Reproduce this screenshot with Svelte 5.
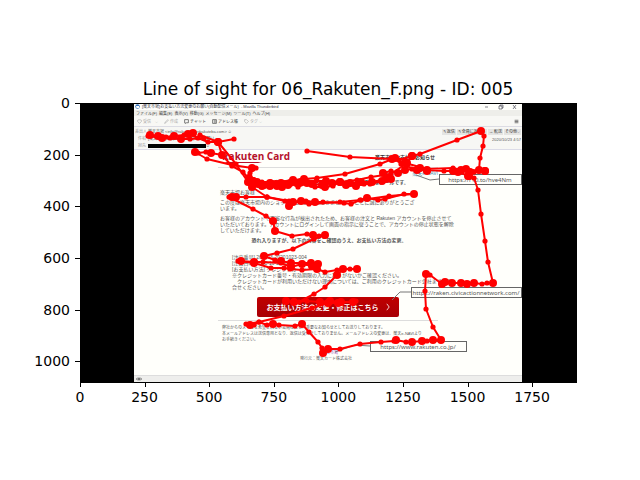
<script>
  const xTicks = [0, 250, 500, 750, 1000, 1250, 1500, 1750];
  const yTicks = [0, 200, 400, 600, 800, 1000];
  const scale = 496 / 1920;

  // Gaze traces: [x, y, large fixation?]
  const traces = [
    [[234, 139], [218, 142, 1], [208, 142], [198, 138], [188, 134, 1], [193, 133, 1], [184, 135], [174, 136, 1], [166, 137], [158, 136, 1], [150, 135, 1], [148, 136], [162, 138, 1], [170, 138], [181, 139, 1], [190, 139], [204, 138], [200, 135], [218, 142, 1], [236, 164], [248, 182, 1]],
    [[195, 152, 1], [198, 153], [206, 152], [211, 153, 1], [222, 155, 1]],
    [[195, 152], [207, 159], [232, 165], [252, 168, 1], [256, 168], [250, 173], [249, 178, 1], [253, 181, 1], [252, 187, 1], [267, 197]],
    [[218, 142], [222, 155], [232, 166], [243, 172], [253, 184, 1], [262, 182], [272, 184, 1], [281, 183, 1], [293, 180, 1], [304, 179, 1], [317, 178], [345, 174], [380, 164], [395, 158, 1], [405, 160]],
    [[253, 181, 1], [258, 184, 1], [264, 185, 1], [270, 186, 1], [276, 184, 1], [282, 187, 1], [290, 183, 1], [298, 187], [307, 183, 1], [315, 187], [325, 187, 1], [333, 186], [340, 182, 1], [346, 185, 1], [356, 186, 1], [364, 184], [370, 184], [382, 181, 1], [391, 179, 1], [388, 176], [383, 173, 1], [391, 171], [398, 173, 1], [405, 170, 1], [412, 169], [420, 168, 1], [427, 171, 1]],
    [[257, 182, 1], [271, 182], [285, 184, 1], [301, 182, 1], [316, 181], [326, 181, 1], [340, 182, 1], [357, 180], [371, 177], [391, 174], [407, 163, 1], [412, 156, 1]],
    [[249, 180, 1], [262, 186, 1], [270, 183, 1], [277, 186, 1], [288, 185, 1], [298, 183, 1], [312, 184, 1], [322, 185, 1], [332, 183, 1], [350, 183, 1], [361, 182, 1], [372, 182, 1], [386, 179, 1]],
    [[307, 151], [350, 157], [392, 159, 1], [399, 160], [412, 156, 1], [420, 154], [457, 140], [481, 131, 1], [484, 136], [483, 146], [480, 158], [479, 170, 1]],
    [[392, 159], [405, 163, 1], [427, 169], [453, 168], [461, 170, 1], [466, 169, 1], [479, 171], [485, 171, 1], [474, 172], [469, 176, 1], [458, 172, 1], [453, 171, 1], [444, 171], [427, 170, 1], [417, 170, 1], [401, 164], [395, 158]],
    [[485, 171, 1], [470, 172, 1], [468, 176, 1], [474, 178], [478, 190], [481, 214], [485, 241], [488, 262], [493, 283, 1], [487, 283], [482, 284], [474, 283, 1], [467, 284, 1], [461, 283, 1], [452, 283, 1], [445, 282, 1], [442, 284, 1], [430, 275], [426, 274, 1], [425, 291], [426, 309], [433, 327], [441, 340, 1], [433, 340, 1], [427, 341], [422, 341, 1], [412, 342, 1], [406, 342], [396, 340, 1], [394, 341], [381, 342], [360, 344], [340, 349], [328, 349, 1], [323, 353, 1], [322, 348], [318, 342], [309, 332], [302, 324, 1], [295, 326], [279, 325], [273, 324, 1], [267, 325], [259, 322], [254, 325], [250, 325, 1], [246, 324], [259, 322], [284, 316], [312, 308], [328, 303, 1], [338, 303, 1], [356, 301]],
    [[414, 194, 1], [404, 194], [385, 199], [378, 200], [367, 198, 1], [360, 200], [351, 204], [344, 203], [323, 202], [315, 202, 1], [306, 201], [301, 201, 1], [293, 202, 1], [289, 206, 1], [285, 201], [267, 197], [246, 197], [236, 197, 1], [232, 197, 1], [229, 197], [253, 209], [266, 216], [273, 221, 1], [275, 231, 1], [292, 236], [307, 234], [313, 235, 1], [319, 236], [325, 235, 1], [314, 239], [293, 249], [277, 253], [264, 256, 1], [275, 260], [281, 261, 1], [291, 263, 1], [303, 263], [311, 263, 1], [318, 264, 1], [312, 266, 1], [302, 264, 1], [291, 267, 1], [281, 263], [263, 262], [254, 262, 1], [241, 261, 1], [238, 261], [254, 263, 1], [271, 268], [284, 268], [290, 269], [302, 270], [317, 269, 1], [325, 272], [337, 270], [343, 269, 1], [350, 269], [357, 269, 1], [343, 269], [337, 275, 1], [325, 287], [314, 294], [299, 302], [286, 301, 1], [294, 302, 1], [307, 301], [320, 302, 1], [330, 301, 1], [341, 302, 1], [353, 302, 1]],
    [[414, 194], [389, 196], [361, 200], [340, 202], [309, 204], [289, 201], [267, 197]]
  ];

  const callouts = [
    { x: 439, y: 174, w: 82, text: 'https://r10.to/hve4Nm', lead: '416,175 430,180 439,179', size: 6 },
    { x: 411, y: 287, w: 110, text: 'https://raken.civicactionnetwork.com/', lead: '392,300 400,292 411,292', size: 6 },
    { x: 370, y: 341, w: 96, text: 'https://www.rakuten.co.jp/', lead: '335,352 355,345 370,346', size: 6 }
  ];
</script>

<svg class="figure" viewBox="0 0 640 480" role="img" aria-label="Line of sight plot">
  <text class="title" x="328" y="95">Line of sight for 06_Rakuten_F.png - ID: 005</text>
  <rect x="80" y="103" width="496" height="279" />

  <foreignObject x="134" y="103" width="388" height="279">
    <div class="mail">
      <header class="titlebar">
        <svg class="app" viewBox="0 0 10 10"><circle cx="5" cy="5" r="4.5" fill="#3474bc" /><path d="M2 4h6v4H3z" fill="#fff" /></svg>
        <span>[楽天市場]お支払い方法変更のお願い(自動配信メール)</span>
        <span class="name">- Mozilla Thunderbird</span>
        <svg class="window" viewBox="0 0 34 6" fill="none" stroke="#555" stroke-width=".6"><path d="M1 3h3M15 2h3v3h-3zM16 2V1h3v3h-1M29 1l3 4M32 1l-3 4" /></svg>
      </header>
      <nav>
        <span>ファイル(F)</span><span>編集(E)</span><span>表示(V)</span><span>移動(G)</span><span>メッセージ(M)</span><span>ツール(T)</span><span>ヘルプ(H)</span>
      </nav>
      <div class="tools">
        <button class="dim"><svg viewBox="0 0 8 8"><path d="M1 2c0-1 6-1 6 0v2L4 7 1 4z" /></svg>受信　⌵</button>
        <button class="dim"><svg viewBox="0 0 8 8"><path d="M1 7l1-2 4-4 1 1-4 4z" /></svg>作成</button>
        <button><svg viewBox="0 0 8 8"><path d="M1 1h6v5H4L2 7V6H1z" /></svg>チャット</button>
        <button><svg viewBox="0 0 8 8"><path d="M1 1h6v6H1zM3 5h3M3 3h3" /></svg>アドレス帳</button>
        <button class="dim"><svg viewBox="0 0 8 8"><path d="M1 1h3l3 3-3 3-3-3z" /></svg>タグ ⌵</button>
        <button class="menu" aria-label="メニュー"><svg viewBox="0 0 8 8"><path d="M1 2h6M1 4h6M1 6h6" /></svg></button>
      </div>
      <section class="head">
        <dl>
          <dt>差出人</dt><dd>楽天市場 &lt;info@rakuten.cardrakuteba.com&gt; ✩</dd>
          <dt>件名</dt><dd>[楽天市場]お支払い方法変更のお願い</dd>
          <dt>宛先</dt><dd><i class="redacted"></i>✩</dd>
        </dl>
        <div class="side">
          <div class="actions"><button>↰ 返信</button><button>↰ 全員に返信 ⌵</button><button>→ 転送</button><button>その他⌵</button></div>
          <time>2020/10/23 4:57</time>
        </div>
      </section>
      <article>
        <div class="brand">
          <span class="logo">Rakuten Card<svg viewBox="0 0 64 3"><path d="M2 1h38l-4 1H5z" /></svg></span>
          <b>楽天市場お支払いお知らせ</b>
        </div>
        <div class="links"><a href="#top">楽天カード</a><a href="#navi">楽天e-NAVI</a></div>
        <p class="notice">本メールは楽天市場をご利用のお客様にお送りする重要なメールです。</p>
        <p>楽天市場お客様</p>
        <p>この度は楽天市場内のショップをご利用いただきまして、まことに誠にありがとうござ<br />います。</p>
        <p class="para">お客様のアカウントで不審な行為が検出されたため、お客様の注文と Rakuten アカウントを停止させて<br />いただいております。アカウントにログインして画面の指示に従うことで、アカウントの停止状態を解除<br />していただけます。</p>
        <p class="ask">恐れ入りますが、以下の内容をご確認のうえ、お支払い方法の変更。</p>
        <p class="order">[注文番号] 265403-20201023-004<br />[注文日時] 2020-10-23 (金)<br />[お支払い方法] クレジットカード<br />※クレジットカード番号・有効期限の入力に誤りがないかご確認ください。<br />　クレジットカードが利用いただけない理由については、ご利用のクレジットカード会社までお問<br />合せください。</p>
        <button class="cta">お支払い方法の変更・修正はこちら<svg viewBox="0 0 5 10"><path d="M1 1l3 4-3 4" /></svg></button>
        <footer>
          弊社からのメールを希望されない会員様にも、重要なお知らせとしてお送りしております。<br />本メールアドレスは送信専用となり、返信は受付けしておりません。メールアドレスの変更は、楽天e-NAVIより<br />お手続きください。
          <div class="issuer"><a href="#ichiba">楽天市場</a><br />発行元：楽天カード株式会社</div>
        </footer>
      </article>
      <div class="status"><svg viewBox="0 0 8 6"><path d="M2 1L0 3l2 2M6 1l2 2-2 2M2 3h4M3 1v4M5 1v4" /></svg></div>
    </div>
  </foreignObject>

  {#each callouts as c}
    <polyline class="lead" points={c.lead} />
    <rect class="callout" x={c.x + 0.5} y={c.y + 0.5} width={c.w} height="10" />
    <text class="url" x={c.x + c.w / 2} y={c.y + 8} font-size={c.size}>{c.text}</text>
  {/each}

  <g class="gaze">
    {#each traces as t}
      <polyline points={t.map((p) => p[0] + ',' + p[1]).join(' ')} />
      {#each t as p}
        <circle cx={p[0]} cy={p[1]} r={p[2] ? 4 : 2.6} />
      {/each}
    {/each}
  </g>

  <g class="axis">
    <rect x="80.5" y="103.5" width="496" height="279" fill="none" />
    {#each xTicks as v}
      <path d="M{Math.round(80 + v * scale) + 0.5} 382v5" />
      <text x={80 + v * scale} y="402" text-anchor="middle">{v}</text>
    {/each}
    {#each yTicks as v}
      <path d="M75 {Math.round(103 + v * scale) + 0.5}h5" />
      <text x="70" y={Math.round(103 + v * scale) + 5} text-anchor="end">{v}</text>
    {/each}
  </g>
</svg>

<style>
  :global(body) { background: #fff; }
  .figure { display: block; width: 100%; height: auto; font-family: "DejaVu Sans", sans-serif; }
  .title { font-size: 17px; text-anchor: middle; }
  .axis text { font-size: 14px; }
  .axis rect, .axis path { stroke: #000; stroke-width: 1; }
  .gaze polyline { fill: none; stroke: #f00; stroke-width: 2; stroke-linejoin: round; }
  .gaze circle { fill: #f00; }
  .callout { fill: #fffffb; stroke: #666; }
  .lead { fill: none; stroke: #777; }
  .url { font-family: "Noto Sans", sans-serif; text-anchor: middle; fill: #555; }

  .mail { display: flex; flex-direction: column; height: 100%; background: #fffffb; color: #555; font: 5px/6px "Liberation Sans", "Noto Sans CJK JP", sans-serif; white-space: nowrap; overflow: hidden; }
  .mail button { font: inherit; color: inherit; background: none; border: 0; padding: 0; margin: 0; }
  .mail svg { fill: none; stroke: currentColor; }
  .titlebar, nav, .tools { display: flex; align-items: center; font-size: 4px; line-height: 5px; flex: none; }
  .titlebar { height: 7px; gap: 2px; padding: 0 4px 0 1px; color: #334; }
  .titlebar .app { width: 5px; height: 5px; stroke: none; }
  .window { width: 34px; height: 6px; margin-left: auto; }
  nav { height: 6px; gap: 2px; padding: 0 2px; background: #eeeeea; color: #444; }
  .tools { height: 10px; gap: 6px; padding: 0 3px; background: #f8f8f5; border-bottom: 1px solid #dcdce4; color: #333; }
  .tools button { display: flex; align-items: center; gap: 1px; }
  .tools svg { width: 5px; height: 5px; }
  .tools .dim { color: #aaa; }
  .tools .menu { margin-left: auto; }
  .head { display: flex; flex: none; justify-content: space-between; height: 22px; background: #f7f7f4; border-bottom: 1px solid #dcdce8; font-size: 4px; line-height: 7px; }
  dl { display: grid; grid-template-columns: 11px auto; margin: 1px 0 0 1px; }
  dt { text-align: right; color: #999; }
  dd { margin: 0 0 0 2px; display: flex; align-items: center; }
  .redacted { width: 58px; height: 4px; background: #000; }
  .side { text-align: right; padding: 2px 1px 0 0; }
  .actions { display: flex; gap: 1px; line-height: 6px; color: #333; }
  .mail .actions button { background: #e4e4e2; padding: 0 1px; }
  time { display: block; margin-top: 1px; }
  article { flex: 1; padding: 0 84px 0 86px; min-height: 0; }
  article p { margin: 0 0 4px; }
  .brand { display: flex; justify-content: space-between; height: 17px; border-bottom: 1px solid #ddd; margin-left: -2px; padding-left: 4px; color: #333; }
  .logo { display: flex; flex-direction: column; font: bold 10px/12px "Open Sans", sans-serif; color: #b5122b; }
  .logo svg { width: 64px; height: 3px; margin-top: -1px; fill: #b5122b; stroke: none; }
  .brand b { padding: 4px 3px 0 0; }
  .links { display: flex; justify-content: flex-end; gap: 8px; line-height: 10px; }
  .links a { color: #4a90b0; text-decoration: none; }
  article .notice { text-align: center; font-weight: bold; margin: 1px 0 4px; }
  article .para { margin-bottom: 4px; }
  article .ask { text-align: center; font-weight: bold; margin-bottom: 11px; }
  article .order { margin: 0 0 7px 12px; }
  .mail .cta { display: flex; justify-content: center; align-items: center; gap: 7px; width: 142px; height: 20px; margin-left: 37px; border-radius: 2px; background: linear-gradient(#c00000, #a80006); color: #fff; font: bold 7px/10px "Noto Sans CJK JP", sans-serif; }
  .cta svg { width: 4px; height: 8px; }
  footer { border-top: 1px solid #ddd; margin: 3px 0 0 -2px; padding: 4px 0 0 4px; font-size: 4px; }
  .issuer { padding: 7px 0 0 78px; }
  .issuer a { color: #8b3fb0; margin-left: 22px; text-decoration: none; }
  .status { display: flex; align-items: center; flex: none; height: 6px; padding-left: 2px; background: #eeeeec; border-top: 1px solid #ddd; color: #444; }
  .status svg { width: 6px; height: 4px; }
</style>
